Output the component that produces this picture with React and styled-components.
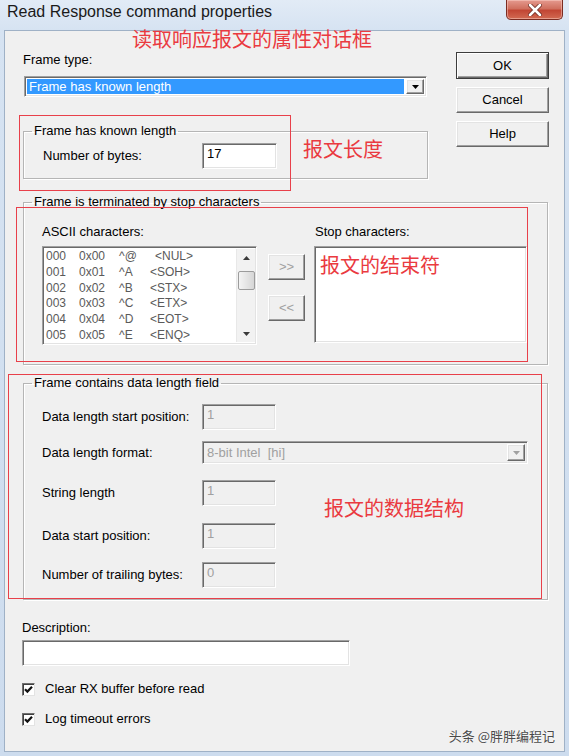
import React from 'react';
import styled, { createGlobalStyle, css } from 'styled-components';

const Global = createGlobalStyle`
  html, body { margin: 0; padding: 0; background: #d5e2f1; }
  body { font-family: "Liberation Sans", Arial, sans-serif; font-size: 13px; color: #000; }
  * { box-sizing: border-box; }
`;

const sunken = css`
  border: 1px solid;
  border-color: #a0a0a0 #ffffff #ffffff #a0a0a0;
  box-shadow: inset 1px 1px 0 #696969, inset -1px -1px 0 #e3e3e3;
`;

const raised = css`
  border: 1px solid;
  border-color: #ffffff #696969 #696969 #ffffff;
  box-shadow: inset -1px -1px 0 #a0a0a0, inset 1px 1px 0 #e3e3e3;
`;

const Window = styled.div`
  position: relative;
  width: 569px;
  height: 756px;
  background: linear-gradient(180deg, #e2ebf6 0%, #d6e3f2 30px, #cddcee 100%);
  display: flex;
  flex-direction: column;
  overflow: hidden;
`;

const TitleBar = styled.div`
  height: 30px;
  flex: none;
  display: flex;
  align-items: flex-start;
  justify-content: space-between;
  padding-left: 7px;
`;

const Title = styled.div`
  font-size: 16px;
  line-height: 16px;
  margin-top: 4px;
  color: #1a1a1a;
`;

const CloseButton = styled.div`
  width: 57px;
  height: 20px;
  margin-right: 6px;
  border: 1px solid #7b2c22;
  border-top: none;
  border-radius: 0 0 5px 5px;
  background: linear-gradient(180deg, #e59a8f 0%, #d0705f 45%, #c24634 55%, #d26a52 100%);
  box-shadow: inset 0 0 0 1px rgba(255, 220, 210, 0.45);
  display: flex;
  align-items: center;
  justify-content: center;
`;

const Client = styled.div`
  flex: 1;
  margin: 0 4px 4px 4px;
  background: #f0f0f0;
  border: 1px solid #9fb1c6;
  padding: 0 16px 0 17px;
  display: flex;
  flex-direction: column;
`;

const TopArea = styled.div`
  display: flex;
  gap: 28px;
  margin: 21px 0 0 1px;
`;

const LeftCol = styled.div`
  width: 405px;
  display: flex;
  flex-direction: column;
`;

const Label = styled.div`
  line-height: 16px;
  height: 16px;
  white-space: nowrap;
  color: ${(p) => (p.$disabled ? '#a0a0a0' : '#000')};
`;

const ComboBox = styled.div`
  ${sunken};
  height: ${(p) => p.$h || 21}px;
  width: ${(p) => p.$w}px;
  margin-left: ${(p) => p.$ml || 0}px;
  margin-top: ${(p) => p.$mt || 0}px;
  background: ${(p) => (p.$disabled ? '#f0f0f0' : '#fff')};
  display: flex;
  align-items: stretch;
  padding: 2px 2px 2px 2px;
  gap: 2px;
`;

const ComboValue = styled.div`
  flex: 1;
  background: ${(p) => (p.$selected ? '#3399ff' : 'transparent')};
  color: ${(p) => (p.$selected ? '#fff' : p.$disabled ? '#a0a0a0' : '#000')};
  padding-left: 2px;
  display: flex;
  align-items: center;
  white-space: pre;
  line-height: 15px;
`;

const ComboArrow = styled.div`
  ${raised};
  width: 18px;
  background: #f0f0f0;
  display: flex;
  align-items: center;
  justify-content: center;
`;

const ButtonsCol = styled.div`
  width: 93px;
  display: flex;
  flex-direction: column;
  gap: 8px;
`;

const Button = styled.div`
  ${raised};
  height: ${(p) => p.$h || 26}px;
  width: ${(p) => p.$w || 93}px;
  background: #f0f0f0;
  display: flex;
  align-items: center;
  justify-content: center;
  line-height: 16px;
  color: ${(p) => (p.$disabled ? '#a0a0a0' : '#000')};
  ${(p) =>
    p.$default &&
    css`
      outline: 1px solid #3c3c3c;
      outline-offset: -1px;
      border-color: #3c3c3c;
      box-shadow: inset 1px 1px 0 #ffffff, inset -1px -1px 0 #696969, inset -2px -2px 0 #a0a0a0;
    `}
`;

const Group = styled.fieldset`
  margin: ${(p) => p.$mt}px 0 0 ${(p) => p.$ml || 0}px;
  padding: 0;
  width: ${(p) => (p.$w ? `${p.$w}px` : 'auto')};
  border: 1px solid #b5b5b5;
  box-shadow: inset 1px 1px 0 #ffffff, 1px 1px 0 #ffffff;
  min-width: 0;
`;

const Legend = styled.legend`
  margin-left: 8px;
  padding: 0 2px;
  line-height: 16px;
  height: 16px;
  white-space: nowrap;
`;

const FieldRow = styled.div`
  display: flex;
  align-items: center;
  padding-left: 18px;
  margin-top: ${(p) => p.$mt || 0}px;
`;

const FieldLabel = styled(Label)`
  width: ${(p) => p.$w || 160}px;
  flex: none;
`;

const TextBox = styled.div`
  ${sunken};
  width: ${(p) => p.$w || 74}px;
  height: ${(p) => p.$h || 26}px;
  background: ${(p) => (p.$disabled ? '#f0f0f0' : '#fff')};
  color: ${(p) => (p.$disabled ? '#a0a0a0' : '#000')};
  padding: 2px 0 0 4px;
  line-height: 16px;
  margin-top: ${(p) => p.$mt || 0}px;
`;

const Group1Body = styled.div`
  padding: 4px 0 9px 1px;
`;

const StopGrid = styled.div`
  display: grid;
  grid-template-columns: 215px 37px 213px;
  grid-template-rows: 16px auto;
  column-gap: 10px;
  row-gap: 6px;
  padding: 14px 0 19px 18px;
`;

const StopLabel = styled(Label)`
  padding-left: ${(p) => p.$pl || 0}px;
`;

const ListBox = styled.div`
  ${sunken};
  height: 99px;
  background: #fff;
  display: flex;
  overflow: hidden;
  padding: 2px 1px 2px 2px;
`;

const ListItems = styled.div`
  flex: 1;
  padding-left: 1px;
  font-size: 12px;
  color: #5a5a5a;
  overflow: hidden;
`;

const ListRow = styled.div`
  display: grid;
  grid-template-columns: 33px 40px 31px auto;
  height: 15.8px;
  line-height: 15.8px;
  white-space: nowrap;
`;

const NameCell = styled.span`
  padding-left: ${(p) => (p.$shift ? 5 : 0)}px;
`;

const ScrollBar = styled.div`
  width: 19px;
  background: #f2f2f2;
  border-left: 1px solid #e8e8e8;
  display: flex;
  flex-direction: column;
  align-items: center;
`;

const ScrollArrow = styled.div`
  height: 17px;
  width: 100%;
  display: flex;
  align-items: center;
  justify-content: center;
`;

const Thumb = styled.div`
  width: 17px;
  height: 19px;
  margin-top: 5px;
  border: 1px solid #9c9c9c;
  border-radius: 2px;
  background: linear-gradient(90deg, #f4f4f4, #e2e2e2 60%, #d6d6d6);
`;

const Spacer = styled.div`
  flex: 1;
`;

const MoveCol = styled.div`
  display: flex;
  flex-direction: column;
  gap: 15px;
  padding-top: 8px;
  margin-left: 1px;
`;

const StopBox = styled.div`
  ${sunken};
  height: 97px;
  background: #fff;
`;

const DataBody = styled.div`
  padding-bottom: 11px;
`;

const BottomArea = styled.div`
  display: flex;
  flex-direction: column;
  margin-top: 20px;
`;

const CheckRow = styled.div`
  display: flex;
  align-items: center;
  gap: 10px;
  height: 16px;
  margin-top: ${(p) => p.$mt}px;
`;

const CheckBox = styled.div`
  width: 13px;
  height: 13px;
  border: 1px solid;
  border-color: #6f6f6f #e3e3e3 #e3e3e3 #6f6f6f;
  box-shadow: inset 1px 1px 0 #404040;
  background: #fff;
  display: flex;
  align-items: center;
  justify-content: center;
`;

const RedBox = styled.div`
  position: absolute;
  left: ${(p) => p.$x}px;
  top: ${(p) => p.$y}px;
  width: ${(p) => p.$w}px;
  height: ${(p) => p.$h}px;
  border: 1.5px solid #e8404a;
  pointer-events: none;
`;

const RedNote = styled.div`
  position: absolute;
  left: ${(p) => p.$x}px;
  top: ${(p) => p.$y}px;
  font-family: "Noto Sans CJK SC", "Liberation Sans", sans-serif;
  font-size: 20px;
  line-height: 24px;
  color: #ea3a40;
  white-space: nowrap;
  pointer-events: none;
`;

const Watermark = styled.div`
  position: absolute;
  right: 14px;
  top: 727px;
  font-family: "Noto Sans CJK SC", "Liberation Sans", sans-serif;
  font-size: 13px;
  line-height: 18px;
  color: #4a4a4a;
  text-shadow: 0 0 2px #fff;
  white-space: nowrap;
`;

const DownTri = ({ color = '#000' }) => (
  <svg width="7" height="4" viewBox="0 0 7 4">
    <polygon points="0,0 7,0 3.5,4" fill={color} />
  </svg>
);

const UpTri = ({ color = '#000' }) => (
  <svg width="7" height="4" viewBox="0 0 7 4">
    <polygon points="0,4 7,4 3.5,0" fill={color} />
  </svg>
);

const Check = () => (
  <svg width="9" height="9" viewBox="0 0 9 9">
    <path d="M1 4.2 L3.4 6.6 L8 1.8" fill="none" stroke="#111" strokeWidth="2.2" />
  </svg>
);

const asciiRows = [
  ['000', '0x00', '^@', '<NUL>', true],
  ['001', '0x01', '^A', '<SOH>'],
  ['002', '0x02', '^B', '<STX>'],
  ['003', '0x03', '^C', '<ETX>'],
  ['004', '0x04', '^D', '<EOT>'],
  ['005', '0x05', '^E', '<ENQ>'],
];

export default function App() {
  return (
    <>
      <Global />
      <Window>
        <TitleBar>
          <Title>Read Response command properties</Title>
          <CloseButton>
            <svg width="14" height="12" viewBox="0 0 14 12">
              <path d="M2 1 L12 11 M12 1 L2 11" stroke="#6b2a22" strokeWidth="4.2" strokeLinecap="round" />
              <path d="M2 1 L12 11 M12 1 L2 11" stroke="#ffffff" strokeWidth="2.6" strokeLinecap="round" />
            </svg>
          </CloseButton>
        </TitleBar>
        <Client>
          <TopArea>
            <LeftCol>
              <Label>Frame type:</Label>
              <ComboBox $w={403} $ml={1} $mt={8}>
                <ComboValue $selected>Frame has known length</ComboValue>
                <ComboArrow>
                  <DownTri />
                </ComboArrow>
              </ComboBox>
              <Group $mt={26} $w={405}>
                <Legend>Frame has known length</Legend>
                <Group1Body>
                  <FieldRow>
                    <FieldLabel $w={159}>Number of bytes:</FieldLabel>
                    <TextBox $w={75}>17</TextBox>
                  </FieldRow>
                </Group1Body>
              </Group>
            </LeftCol>
            <ButtonsCol>
              <Button $default $h={27}>OK</Button>
              <Button>Cancel</Button>
              <Button>Help</Button>
            </ButtonsCol>
          </TopArea>

          <Group $mt={15} $ml={1}>
            <Legend>Frame is terminated by stop characters</Legend>
            <StopGrid>
              <StopLabel>ASCII characters:</StopLabel>
              <div />
              <StopLabel $pl={1}>Stop characters:</StopLabel>
              <ListBox>
                <ListItems>
                  {asciiRows.map(([a, b, c, d, shift]) => (
                    <ListRow key={a}>
                      <span>{a}</span>
                      <span>{b}</span>
                      <span>{c}</span>
                      <NameCell $shift={shift}>{d}</NameCell>
                    </ListRow>
                  ))}
                </ListItems>
                <ScrollBar>
                  <ScrollArrow>
                    <UpTri color="#3a3a3a" />
                  </ScrollArrow>
                  <Thumb />
                  <Spacer />
                  <ScrollArrow>
                    <DownTri color="#3a3a3a" />
                  </ScrollArrow>
                </ScrollBar>
              </ListBox>
              <MoveCol>
                <Button $w={37} $disabled>&gt;&gt;</Button>
                <Button $w={37} $disabled>&lt;&lt;</Button>
              </MoveCol>
              <StopBox />
            </StopGrid>
          </Group>

          <Group $mt={10} $ml={1}>
            <Legend>Frame contains data length field</Legend>
            <DataBody>
              <FieldRow $mt={13}>
                <FieldLabel>Data length start position:</FieldLabel>
                <TextBox $disabled>1</TextBox>
              </FieldRow>
              <FieldRow $mt={11}>
                <FieldLabel>Data length format:</FieldLabel>
                <ComboBox $w={326} $h={23} $disabled>
                  <ComboValue $disabled>8-bit Intel  [hi]</ComboValue>
                  <ComboArrow>
                    <DownTri color="#a0a0a0" />
                  </ComboArrow>
                </ComboBox>
              </FieldRow>
              <FieldRow $mt={16}>
                <FieldLabel>String length</FieldLabel>
                <TextBox $disabled>1</TextBox>
              </FieldRow>
              <FieldRow $mt={17}>
                <FieldLabel>Data start position:</FieldLabel>
                <TextBox $disabled>1</TextBox>
              </FieldRow>
              <FieldRow $mt={13}>
                <FieldLabel>Number of trailing bytes:</FieldLabel>
                <TextBox $disabled>0</TextBox>
              </FieldRow>
            </DataBody>
          </Group>

          <BottomArea>
            <Label>Description:</Label>
            <TextBox $w={328} $mt={4} />
            <CheckRow $mt={15}>
              <CheckBox>
                <Check />
              </CheckBox>
              <Label>Clear RX buffer before read</Label>
            </CheckRow>
            <CheckRow $mt={14}>
              <CheckBox>
                <Check />
              </CheckBox>
              <Label>Log timeout errors</Label>
            </CheckRow>
          </BottomArea>
        </Client>

        <RedBox $x={19} $y={115} $w={272} $h={76} />
        <RedBox $x={16} $y={207} $w={512} $h={155} />
        <RedBox $x={8} $y={374} $w={534} $h={225} />
        <RedNote $x={132} $y={27}>读取响应报文的属性对话框</RedNote>
        <RedNote $x={303} $y={137}>报文长度</RedNote>
        <RedNote $x={320} $y={253}>报文的结束符</RedNote>
        <RedNote $x={324} $y={496}>报文的数据结构</RedNote>
        <Watermark>头条 @胖胖编程记</Watermark>
      </Window>
    </>
  );
}
